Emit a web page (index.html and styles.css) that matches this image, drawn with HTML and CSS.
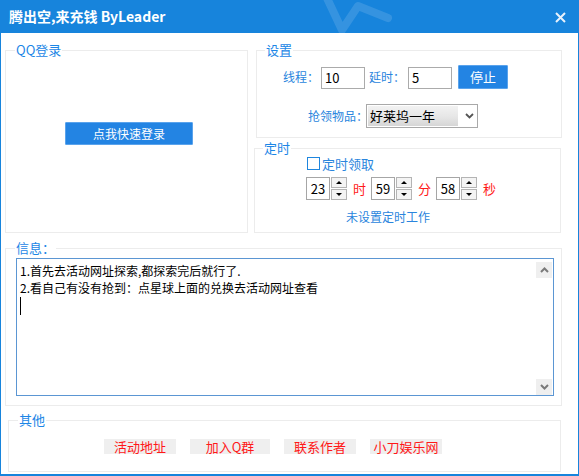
FILE: index.html
```html
<!DOCTYPE html>
<html lang="zh-CN">
<head>
<meta charset="utf-8">
<title>腾出空,来充钱 ByLeader</title>
<link rel="stylesheet" href="styles.css">
</head>
<body>
<div class="window">
  <div class="titlebar">
    <span class="title">腾出空,来充钱 ByLeader</span>
    <svg class="watermark" width="90" height="33" viewBox="0 0 90 33">
      <polyline points="8,-4 24,30 40,6 70,18" fill="none" stroke="rgba(255,255,255,0.13)" stroke-width="8" stroke-linecap="round" stroke-linejoin="round"/>
    </svg>
    <svg class="close" width="11" height="11" viewBox="0 0 11 11">
      <path d="M1 1 L10 10 M10 1 L1 10" stroke="#e8f1fb" stroke-width="2" fill="none"/>
    </svg>
  </div>
  <div class="content">
    <div class="row-top">
      <fieldset class="grp grp-qq">
        <legend class="lg-qq">QQ登录</legend>
        <button class="btn-blue btn-login">点我快速登录</button>
      </fieldset>
      <div class="col-right">
        <fieldset class="grp grp-set">
          <legend class="lg-set">设置</legend>
          <div class="set-row1">
            <span class="lbl lbl-thread">线程<span class="colon">：</span></span>
            <span class="inp">10</span>
            <span class="lbl lbl-delay">延时<span class="colon">：</span></span>
            <span class="inp">5</span>
            <button class="btn-blue btn-stop">停止</button>
          </div>
          <div class="set-row2">
            <span class="lbl lbl-item">抢领物品<span class="colon">：</span></span>
            <span class="select">
              <span class="sel-text">好莱坞一年</span>
              <svg class="sel-arrow" width="9" height="6" viewBox="0 0 9 6"><path d="M1 1 L4.5 4.5 L8 1" stroke="#555" stroke-width="1.8" fill="none"/></svg>
            </span>
          </div>
        </fieldset>
        <fieldset class="grp grp-timer">
          <legend class="lg-timer">定时</legend>
          <div class="chk-row">
            <span class="chk"></span>
            <span class="chk-lbl">定时领取</span>
          </div>
          <div class="spin-row">
            <span class="spin-box">23</span>
            <span class="spin-btns"><span class="sb"><i class="up"></i></span><span class="sb"><i class="down"></i></span></span>
            <span class="unit">时</span>
            <span class="spin-box">59</span>
            <span class="spin-btns"><span class="sb"><i class="up"></i></span><span class="sb"><i class="down"></i></span></span>
            <span class="unit">分</span>
            <span class="spin-box">58</span>
            <span class="spin-btns"><span class="sb"><i class="up"></i></span><span class="sb"><i class="down"></i></span></span>
            <span class="unit">秒</span>
          </div>
          <div class="status">未设置定时工作</div>
        </fieldset>
      </div>
    </div>
    <fieldset class="grp grp-info">
      <legend class="lg-info">信息<span class="colon">：</span></legend>
      <div class="textbox">
        <div class="text">
          <div class="line">1.首先去活动网址探索,都探索完后就行了.</div>
          <div class="line">2.看自己有没有抢到<span class="colon">：</span>点星球上面的兑换去活动网址查看</div>
          <div class="line"><span class="caret"></span></div>
        </div>
        <div class="scroll">
          <span class="sbtn"><svg width="9" height="6" viewBox="0 0 9 6"><path d="M1 5 L4.5 1.5 L8 5" stroke="#7a7a7a" stroke-width="2" fill="none"/></svg></span>
          <span class="sbtn"><svg width="9" height="6" viewBox="0 0 9 6"><path d="M1 1 L4.5 4.5 L8 1" stroke="#7a7a7a" stroke-width="2" fill="none"/></svg></span>
        </div>
      </div>
    </fieldset>
    <fieldset class="grp grp-other">
      <legend class="lg-other">其他</legend>
      <div class="links">
        <span class="link w72">活动地址</span>
        <span class="link w80">加入Q群</span>
        <span class="link w72">联系作者</span>
        <span class="link w72">小刀娱乐网</span>
      </div>
    </fieldset>
  </div>
</div>
</body>
</html>
```
FILE: styles.css
```css
* { box-sizing: border-box; }
html, body { margin: 0; padding: 0; background: #ffffff; }
body {
  font-family: "Noto Sans CJK SC", "Noto Sans", "DejaVu Sans", sans-serif;
  font-size: 12px;
  color: #000;
}
.colon { font-family: "Noto Sans CJK JP", "Noto Sans CJK SC", sans-serif; }
.window {
  width: 579px;
  height: 476px;
  border-left: 1px solid #1784dc;
  border-right: 1px solid #1784dc;
  border-bottom: 2px solid #1784dc;
  background: #fff;
  overflow: hidden;
}
.titlebar {
  position: relative;
  height: 33px;
  background: #1784dc;
  display: flex;
  align-items: center;
  justify-content: space-between;
  padding: 0 9px 0 9px;
  margin: 0 -1px;
}
.title {
  color: #fff;
  font-weight: bold;
  font-size: 14px;
  line-height: 16px;
  margin-top: -1px;
}
.watermark { position: absolute; left: 318px; top: 0; }
.close { margin-right: 4px; margin-top: 1px; }

.content { padding: 10px 0 0 4px; }
.row-top { display: flex; align-items: flex-start; }

.grp {
  margin: 0;
  padding: 0;
  border: 1px solid #ececec;
  min-width: 0;
}
legend {
  padding: 0 1px;
  font-size: 13px;
  line-height: 14px;
  color: #1c86e6;
}
.lg-qq { margin-left: 9px; }
.lg-set { margin-left: 8px; }
.lg-timer { margin-left: 8px; }
.lg-info { margin-left: 9px; }
.lg-other { margin-left: 9px; }

.grp-qq { width: 243px; height: 190px; }
.btn-blue {
  border: 1px solid #5aa3ec;
  background: #2384e3;
  color: #fff;
  font-family: inherit;
  font-size: 12px;
  padding: 0;
  border-radius: 1px;
}
.btn-login {
  display: block;
  width: 128px;
  height: 23px;
  line-height: 20px;
  margin: 65px 0 0 59px;
}

.col-right { margin-left: 6px; width: 308px; }
.grp-set { margin-left: 2px; width: 306px; height: 95px; }
.lbl { color: #2a85dd; font-size: 12px; line-height: 14px; white-space: nowrap; }
.set-row1 {
  display: flex;
  align-items: center;
  height: 24px;
  margin-top: 8px;
  padding-left: 26px;
}
.lbl-thread { width: 38px; }
.lbl-delay { width: 39px; margin-left: 4px; }
.inp {
  width: 44px;
  height: 22px;
  border: 1px solid #ababab;
  font-size: 13px;
  line-height: 20px;
  padding-left: 3px;
  margin-top: 2px;
}
.btn-stop {
  width: 50px;
  height: 24px;
  margin-left: 6px;
  font-size: 13px;
  line-height: 20px;
}
.set-row2 {
  display: flex;
  align-items: center;
  margin-top: 15px;
  padding-left: 51px;
}
.lbl-item { width: 58px; }
.select {
  display: flex;
  align-items: center;
  width: 112px;
  height: 24px;
  border: 1px solid #a9a9a9;
  padding: 1px;
  background: #fff;
}
.sel-text {
  width: 90px;
  height: 20px;
  line-height: 20px;
  font-size: 13px;
  padding-left: 2px;
  background: linear-gradient(#f2f2f2, #e6e6e6 55%, #d6d6d6);
}
.sel-arrow { margin-left: 7px; }

.grp-timer { margin-top: 3px; width: 307px; height: 92px; }
.chk-row {
  display: flex;
  align-items: center;
  margin-top: 1px;
  padding-left: 52px;
  height: 15px;
}
.chk {
  width: 13px;
  height: 13px;
  border: 1px solid #1f86de;
  background: #fff;
}
.chk-lbl { color: #2a85dd; font-size: 13px; line-height: 15px; margin-left: 2px; }
.spin-row {
  display: flex;
  align-items: center;
  margin-top: 6px;
  padding-left: 51px;
  height: 23px;
}
.spin-box {
  width: 24px;
  height: 23px;
  border: 1px solid #a6a6a6;
  font-size: 13px;
  line-height: 21px;
  text-align: center;
}
.spin-btns {
  display: flex;
  flex-direction: column;
  justify-content: space-between;
  width: 16px;
  height: 23px;
  margin-left: 1px;
}
.sb {
  display: flex;
  align-items: center;
  justify-content: center;
  height: 11px;
  border: 1px solid #b4b4b4;
  background: #f4f4f4;
}
.up {
  width: 0; height: 0;
  border-left: 3px solid transparent;
  border-right: 3px solid transparent;
  border-bottom: 3px solid #000;
}
.down {
  width: 0; height: 0;
  border-left: 3px solid transparent;
  border-right: 3px solid transparent;
  border-top: 3px solid #000;
}
.unit {
  color: #ff1a1a;
  font-size: 13px;
  line-height: 15px;
  margin: 0 5px 0 6px;
}
.status {
  margin-top: 10px;
  padding-left: 91px;
  color: #2a85dd;
  font-size: 12px;
  line-height: 14px;
}

.grp-info { margin-top: 8px; width: 557px; height: 165px; }
.textbox {
  display: flex;
  width: 538px;
  height: 138px;
  margin: 3px 0 0 10px;
  border: 1px solid #5b96d3;
}
.text { flex: 1; padding: 3px 0 0 3px; }
.line { font-size: 12px; line-height: 17px; height: 17px; white-space: nowrap; }
.caret {
  display: inline-block;
  width: 1px;
  height: 18px;
  background: #000;
  vertical-align: top;
  margin-top: 1px;
}
.scroll {
  width: 17px;
  display: flex;
  flex-direction: column;
  justify-content: space-between;
  padding: 3px 1px 0 0;
}
.sbtn {
  display: flex;
  align-items: center;
  justify-content: center;
  width: 16px;
  height: 16px;
  background: #efefef;
}

.grp-other { margin: 7px 0 0 3px; width: 553px; height: 59px; }
.links {
  display: flex;
  margin-top: 12px;
  padding-left: 95px;
  gap: 14px;
}
.link {
  height: 15px;
  background: #efefef;
  color: #ff1818;
  font-size: 13px;
  line-height: 15px;
  text-align: center;
}
.w72 { width: 72px; }
.w80 { width: 80px; }
```
